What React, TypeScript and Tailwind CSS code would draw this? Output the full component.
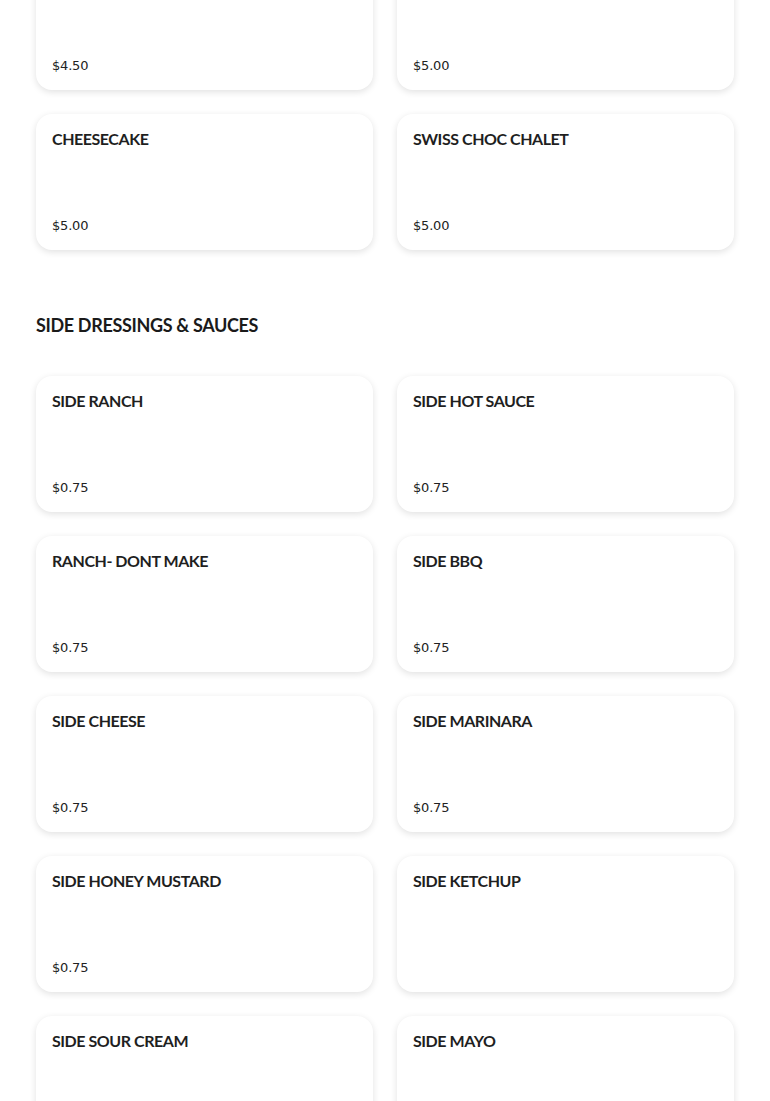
import React from "react";

type Item = { name: string; price?: string };

const top: Item[] = [
  { name: "", price: "$4.50" },
  { name: "", price: "$5.00" },
  { name: "CHEESECAKE", price: "$5.00" },
  { name: "SWISS CHOC CHALET", price: "$5.00" },
];

const sauces: Item[] = [
  { name: "SIDE RANCH", price: "$0.75" },
  { name: "SIDE HOT SAUCE", price: "$0.75" },
  { name: "RANCH- DONT MAKE", price: "$0.75" },
  { name: "SIDE BBQ", price: "$0.75" },
  { name: "SIDE CHEESE", price: "$0.75" },
  { name: "SIDE MARINARA", price: "$0.75" },
  { name: "SIDE HONEY MUSTARD", price: "$0.75" },
  { name: "SIDE KETCHUP" },
  { name: "SIDE SOUR CREAM" },
  { name: "SIDE MAYO" },
];

function Card({ item }: { item: Item }) {
  return (
    <div className="h-[136px] rounded-[16px] bg-white shadow-[0_2px_7px_rgba(0,0,0,0.12)] px-4 pt-[14px] pb-[15px] flex flex-col justify-between">
      <div className="text-[16px] leading-[22px] font-bold text-[#1f1f1f] font-['Lato',sans-serif] tracking-[-0.45px]">
        {item.name}
      </div>
      {item.price ? (
        <div className="text-[13px] leading-[18px] text-[#222] font-['DejaVu_Sans',sans-serif] tracking-[-0.2px]">
          {item.price}
        </div>
      ) : (
        <div className="h-[18px]" />
      )}
    </div>
  );
}

export default function App() {
  return (
    <div className="bg-white min-h-screen overflow-hidden">
      <div className="px-[36px] mt-[-46px]">
        <div className="grid grid-cols-2 gap-x-[24px] gap-y-[24px]">
          {top.map((it, i) => (
            <Card key={i} item={it} />
          ))}
        </div>
        <h2 className="pt-[63px] pb-[39px] text-[18px] leading-[24px] font-bold text-[#1a1a1a] font-['Lato',sans-serif] tracking-[-0.35px]">
          SIDE DRESSINGS &amp; SAUCES
        </h2>
        <div className="grid grid-cols-2 gap-x-[24px] gap-y-[24px]">
          {sauces.map((it, i) => (
            <Card key={i} item={it} />
          ))}
        </div>
      </div>
    </div>
  );
}
